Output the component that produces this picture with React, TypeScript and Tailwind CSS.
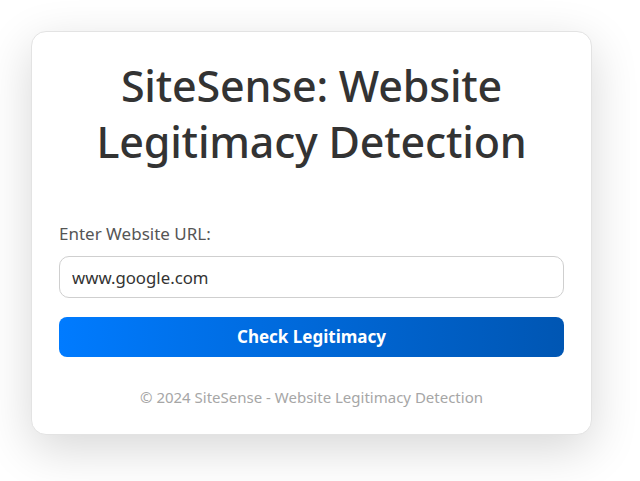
import { useState } from "react";

const App = () => {
  const [url, setUrl] = useState("www.google.com");

  return (
    <div className="min-h-[481px] w-[640px] bg-white font-['Noto_Sans',sans-serif]">
      <div className="pt-[31px] pl-[31px]">
        <div className="w-[561px] h-[404px] rounded-[15px] bg-white border border-[#e3e3e3] shadow-[0_14px_48px_rgba(0,0,0,0.16)] px-[27px] pt-[26px]">
          {/* header */}
          <h1 className="text-center text-[43px] leading-[56px] font-medium text-[#333] tracking-[-0.2px]">
            SiteSense: Website
            <br />
            Legitimacy Detection
          </h1>

          {/* form */}
          <div className="mt-[53px]">
            <label className="block text-[17px] leading-[22px] text-[#555]">
              Enter Website URL:
            </label>
            <input
              value={url}
              onChange={(e) => setUrl(e.target.value)}
              className="mt-[11px] block w-full h-[42px] rounded-[10px] border border-[#cfcfcf] px-3 text-[16.8px] text-[#333] outline-none"
            />
            <button className="mt-[19px] block w-full h-[40px] rounded-[8px] bg-gradient-to-r from-[#007bff] to-[#0056b3] text-white font-bold text-[17px]">
              Check Legitimacy
            </button>
          </div>

          {/* footer */}
          <p className="mt-[29px] text-center text-[15px] text-[#a6a6a6]">
            © 2024 SiteSense - Website Legitimacy Detection
          </p>
        </div>
      </div>
    </div>
  );
};

export default App;
